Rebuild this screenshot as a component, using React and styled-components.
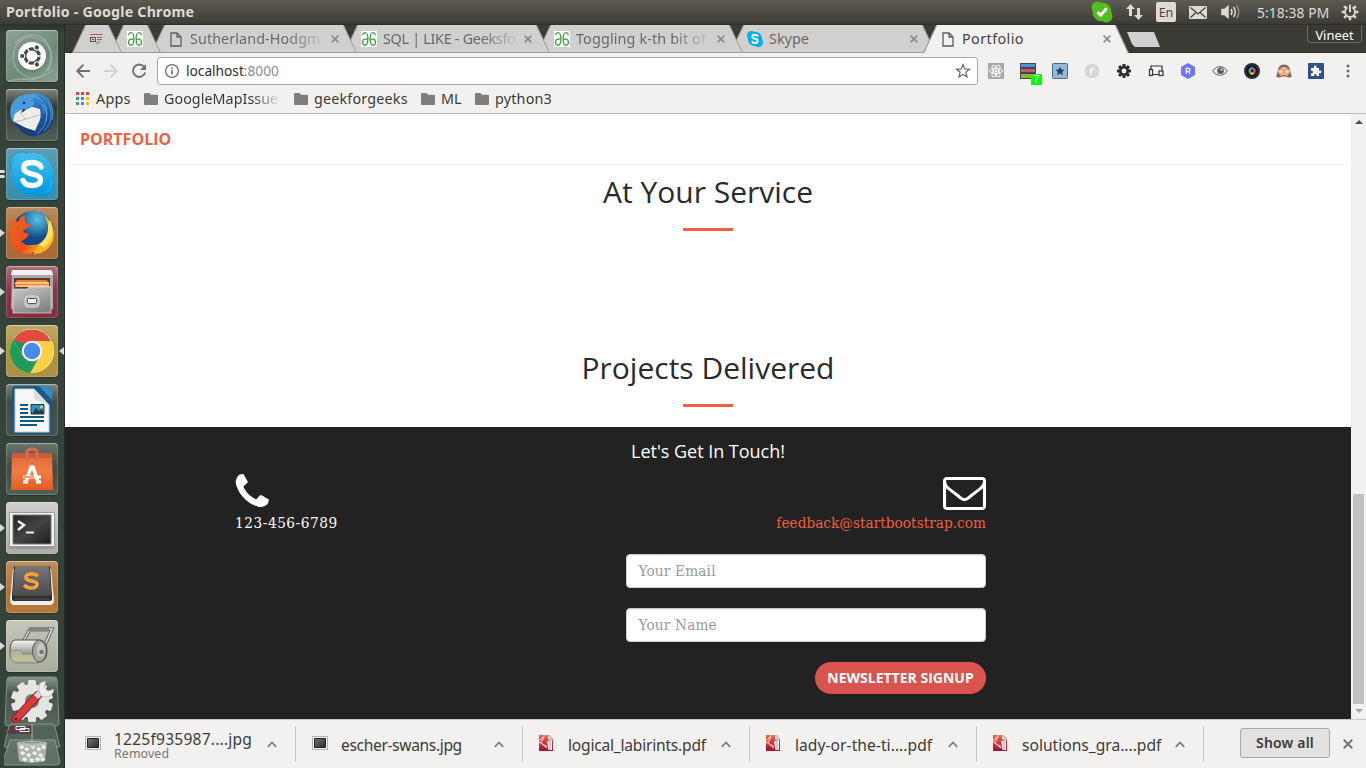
import React from "react";
import styled, { createGlobalStyle } from "styled-components";

const Global = createGlobalStyle`
  * { box-sizing: border-box; }
  html, body { margin: 0; padding: 0; overflow: hidden; }
  body { font-family: "Noto Sans", "Open Sans", sans-serif; color: #3c3b37; }
  svg { display: block; flex: none; }
`;

const Desktop = styled.div`
  width: 1366px;
  height: 768px;
  display: flex;
  flex-direction: column;
  overflow: hidden;
`;

/* ---------- system panel ---------- */
const Panel = styled.header`
  height: 24px;
  display: flex;
  align-items: center;
  padding: 0 7px 0 6px;
  background: linear-gradient(#5f5d4f 0, #59564e 3px, #403e39 22px, #3a3833 24px);
  color: #dfdbd2;
`;
const PanelTitle = styled.div`
  flex: 1;
  font-size: 14.2px;
  font-weight: 700;
  letter-spacing: 0.22px;
  line-height: 24px;
`;
const Indicators = styled.div`
  display: flex;
  align-items: center;
`;
const Indicator = styled.div`
  margin-left: ${(p) => p.$gap}px;
`;
const LangBox = styled.div`
  width: 20px;
  height: 20px;
  margin-left: 13px;
  border-radius: 2px;
  background: #dfdbd2;
  color: #45433e;
  font-size: 12.5px;
  line-height: 21px;
  text-align: center;
`;
const Clock = styled.div`
  width: 72px;
  margin-left: 16px;
  font-size: 13.8px;
  letter-spacing: 0.1px;
  white-space: nowrap;
`;

/* ---------- dock ---------- */
const Body = styled.div`
  flex: 1;
  display: flex;
  min-height: 0;
`;
const Dock = styled.nav`
  width: 65px;
  padding: 6px 0 0 6px;
  display: flex;
  flex-direction: column;
  gap: 7px;
  background: linear-gradient(#28332a 0, #364339 9px, #35433a 60%, #344238);
  border-right: 1px solid #262d28;
`;
const DockTile = styled.div`
  position: relative;
  width: 52px;
  height: 52px;
  flex: none;
  border-radius: 4px;
  background: ${(p) => p.$bg};
  box-shadow: inset 0 0 0 1px rgba(255, 255, 255, 0.17), inset 0 1px 1px rgba(255, 255, 255, 0.35),
    0 1px 1px rgba(0, 0, 0, 0.25);
`;
const Pip = styled.i`
  position: absolute;
  left: -6px;
  top: 22px;
  border: solid transparent;
  border-width: 4px 0 4px 5px;
  border-left-color: #d9d9d9;
`;
const PipBar = styled.i`
  position: absolute;
  left: -6px;
  top: ${(p) => p.$top}px;
  width: 5px;
  height: 2.5px;
  border-radius: 0 2px 2px 0;
  background: #dcdcdc;
`;
const FocusPip = styled.i`
  position: absolute;
  right: -6px;
  top: 22px;
  border: solid transparent;
  border-width: 4px 5px 4px 0;
  border-right-color: #d9d9d9;
`;
const Folded = styled.div`
  margin: -3px 0 0 -2px;
`;

/* ---------- browser ---------- */
const Browser = styled.main`
  flex: 1;
  display: flex;
  flex-direction: column;
  min-width: 0;
`;
const TabStrip = styled.div`
  height: 29px;
  padding: 1px 4px 0 7px;
  display: flex;
  align-items: flex-start;
  background: #3c3a35;
  box-shadow: inset 0 1px 0 #2f2e2a, inset 0 -1px 0 #2b2a27;
`;
const TabShape = styled.div`
  position: relative;
  z-index: ${(p) => (p.$active ? 20 : p.$z)};
  width: ${(p) => p.$width}px;
  height: 28px;
  flex: none;
  margin-right: ${(p) => p.$next}px;
  display: flex;
  align-items: center;
  padding: 0 18px 0 ${(p) => p.$pad}px;
  color: ${(p) => (p.$active ? "#45443f" : "#6b6966")};
  &::before,
  &::after {
    content: "";
    position: absolute;
    inset: 0;
    z-index: -1;
    clip-path: polygon(0 100%, 13px 0, calc(100% - 13px) 0, 100% 100%);
    background: #9b9997;
  }
  &::after {
    inset: 0 1.3px ${(p) => (p.$active ? 0 : 1)}px 1.3px;
    background: ${(p) => (p.$active ? "#f2f1f0" : "#d2d0cf")};
  }
`;
const TabTitle = styled.span`
  flex: none;
  white-space: nowrap;
  font-size: 14.4px;
  line-height: 26px;
  letter-spacing: ${(p) => p.$ls || 0}px;
  margin-left: ${(p) => p.$gap}px;
  -webkit-mask-image: ${(p) => (p.$fade ? "linear-gradient(90deg, #000 74%, rgba(0, 0, 0, 0.15))" : "none")};
`;
const TabClose = styled.div`
  margin-left: auto;
`;
const NewTab = styled.div`
  width: 33px;
  height: 15px;
  margin: 7px 0 0 -2px;
  background: #d2d0cf;
  clip-path: polygon(0 0, 27px 0, 33px 100%, 8px 100%, 5px 80%);
`;
const UserBadge = styled.div`
  margin-left: auto;
  width: 55px;
  height: 18px;
  border: 1px solid #6d6b66;
  border-top: none;
  border-radius: 0 0 4px 4px;
  background: #3a3833;
  color: #fff;
  font-size: 12.9px;
  line-height: 20px;
  text-align: center;
`;
const Toolbar = styled.div`
  height: 33px;
  display: flex;
  align-items: center;
  padding: 2px 10px 0 10px;
  background: #f2f1f0;
`;
const NavButtons = styled.div`
  display: flex;
  gap: 12px;
  margin-right: 10px;
`;
const UrlBox = styled.div`
  width: 821px;
  height: 28px;
  display: flex;
  align-items: center;
  padding: 0 6px 0 6px;
  border: 1px solid #a9a7a5;
  border-radius: 3px;
  background: #fff;
  font-size: 13.8px;
  color: #2f2f2f;
`;
const Address = styled.span`
  flex: 1;
  margin-left: 6px;
  letter-spacing: -0.05px;
  span { color: #8e8e8e; }
`;
const Extensions = styled.div`
  display: flex;
  gap: 16px;
  margin-left: 10px;
`;
const Extension = styled.div`
  position: relative;
  width: 16px;
  height: 16px;
`;
const Count = styled.b`
  position: absolute;
  left: 11px;
  top: 11px;
  width: 11px;
  height: 11px;
  background: #0f0;
  color: #fff;
  font: 10.5px/11px "Liberation Sans", sans-serif;
  text-align: center;
`;
const Bookmarks = styled.div`
  height: 28px;
  display: flex;
  align-items: center;
  padding: 0 0 2px 11px;
  border-bottom: 1px solid #b9b7b5;
  background: #f2f1f0;
`;
const Bookmark = styled.div`
  display: flex;
  align-items: center;
  width: ${(p) => p.$width}px;
  gap: ${(p) => p.$gap || 6}px;
  font-size: 14.3px;
  line-height: 24px;
  color: #3a3935;
  letter-spacing: ${(p) => p.$ls || 0}px;
  white-space: nowrap;
  span {
    -webkit-mask-image: ${(p) => (p.$fade ? "linear-gradient(90deg, #000 78%, rgba(0, 0, 0, 0.1))" : "none")};
  }
`;

/* ---------- web page ---------- */
const Viewport = styled.div`
  flex: 1;
  display: flex;
  min-height: 0;
`;
const Page = styled.div`
  flex: 1;
  display: flex;
  flex-direction: column;
  background: #fff;
  font-family: "Open Sans", sans-serif;
`;
const Navbar = styled.div`
  height: 51px;
  padding: 0 15px;
  border-bottom: 1px solid #f2f2f2;
  color: #f05f40;
  font-size: 16px;
  font-weight: 700;
  line-height: 50px;
`;
const Section = styled.section`
  height: ${(p) => p.$height}px;
  padding-top: 10px;
  text-align: center;
`;
const Heading = styled.h2`
  margin: 0;
  font-size: 30px;
  font-weight: 400;
  line-height: 33px;
  color: #2a2a2a;
`;
const Rule = styled.div`
  width: 50px;
  height: 3px;
  margin: 20px auto 0;
  background: #f05f40;
`;
const Contact = styled.section`
  flex: 1;
  padding-top: 14px;
  background: #222;
  color: #fff;
  font-family: "DejaVu Serif Condensed", "DejaVu Serif", serif;
  font-stretch: condensed;
  h4 {
    margin: 0;
    font: 400 18px/20px "Open Sans", sans-serif;
    letter-spacing: -0.03px;
    text-align: center;
  }
`;
const ContactInner = styled.div`
  width: 751px;
  margin-left: 170px;
`;
const ContactRow = styled.div`
  display: flex;
  justify-content: space-between;
  height: 93px;
  padding-top: 13px;
  font-size: 15.2px;
  line-height: 20px;
`;
const Way = styled.div`
  display: flex;
  flex-direction: column;
  align-items: ${(p) => (p.$end ? "flex-end" : "flex-start")};
  color: ${(p) => (p.$end ? "#f05f40" : "#fff")};
  letter-spacing: ${(p) => p.$ls}px;
  padding-top: ${(p) => (p.$end ? 3 : 0)}px;
  svg { margin-bottom: ${(p) => (p.$end ? 3 : 6)}px; }
`;
const Form = styled.form`
  display: flex;
  flex-direction: column;
  align-items: flex-end;
  gap: 20px;
`;
const Field = styled.div`
  width: 360px;
  height: 34px;
  padding: 0 11.5px;
  border: 1px solid #ccc;
  border-radius: 4px;
  background: #fff;
  box-shadow: inset 0 1px 1px rgba(0, 0, 0, 0.075);
  color: #999;
  font-size: 15.2px;
  letter-spacing: 0.18px;
  line-height: 32px;
`;
const Signup = styled.div`
  width: 171px;
  height: 32px;
  border-radius: 16px;
  background: #d9534f;
  font: 700 14px/32px "Open Sans", sans-serif;
  text-align: center;
`;
const Scrollbar = styled.div`
  width: 15px;
  display: flex;
  flex-direction: column;
  align-items: center;
  justify-content: space-between;
  padding: 6px 0 6px;
  background: #f1f1f1;
`;
const Arrow = styled.i`
  border: solid transparent;
  border-width: ${(p) => (p.$up ? "0 4px 4px" : "4px 4px 0")};
  border-color: ${(p) => (p.$up ? "transparent transparent #505050" : "#a3a3a3 transparent transparent")};
`;
const Thumb = styled.div`
  width: 11px;
  height: 210px;
  margin: auto 0 5px;
  background: #c1c1c1;
`;

/* ---------- downloads ---------- */
const Shelf = styled.footer`
  height: 49px;
  display: flex;
  align-items: center;
  padding: 0 13px 0 4px;
  border-top: 1px solid #c9c7c6;
  background: #f2f1f0;
`;
const Download = styled.div`
  width: 227px;
  height: 36px;
  display: flex;
  align-items: center;
  padding: 0 18px 0 16px;
  border-right: 1px solid #cac8c6;
  > svg:first-child { margin-top: -2px; }
  > svg:last-child { margin-left: auto; }
`;
const FileName = styled.div`
  margin-left: ${(p) => p.$gap}px;
  padding-top: ${(p) => (p.$note ? 0 : 1)}px;
  font-size: 15.6px;
  line-height: 20px;
  letter-spacing: ${(p) => p.$ls}px;
  white-space: nowrap;
`;
const FileNote = styled.div`
  margin-top: -2px;
  font-size: 12.4px;
  line-height: 13px;
  letter-spacing: 0.1px;
  color: #777572;
`;
const ShowAll = styled.div`
  width: 90px;
  height: 30px;
  margin: -2px 13px 0 auto;
  border: 1px solid #aaa8a5;
  border-radius: 3px;
  background: #e4e2e0;
  font-size: 14px;
  font-weight: 600;
  line-height: 28px;
  text-align: center;
  letter-spacing: 0.2px;
`;

/* ---------- small drawings ---------- */
const Cross = ({ size = 8, color = "#8a8886", w = 1.5 }) => (
  <svg width={size} height={size} viewBox="0 0 8 8" stroke={color} strokeWidth={w}><path d="M.6.6l6.8 6.8M7.4.6L.6 7.4" /></svg>
);
const DocIcon = () => (
  <svg width="12" height="15" viewBox="0 0 12 15" fill="none" stroke="#5f5e5c" strokeWidth="1.3"><path d="M1 1h6l4 4v9H1zM7 1v4h4" /></svg>
);
const GeeksIcon = () => (
  <svg width="16" height="16" viewBox="0 0 16 16" fill="none" stroke="#3a9a3d" strokeWidth="1.25">
    <path fill="#fff" stroke="none" d="M0 0h16v16H0z" />
    <path d="M1.500 4Q2.200 1.500 4 1.500 6.900 2 6.900 7.500 6.900 14.300 4 14.300 1.500 14 1.500 11.200 1.700 8.200 4.500 8H7M14.500 4Q13.800 1.500 12 1.500 9.100 2 9.100 7.500 9.100 14.300 12 14.300 14.500 14 14.500 11.200 14.300 8.200 11.500 8H9" />
  </svg>
);
const SkypeTabIcon = () => (
  <svg width="16" height="16" viewBox="0 0 16 16">
    <circle cx="8" cy="8" r="7.200" fill="#00aff0" /><circle cx="4.500" cy="4.500" r="4.500" fill="#00aff0" /><circle cx="11.500" cy="11.500" r="4.500" fill="#00aff0" />
    <path d="M11 5.500Q10 3.800 8 3.800 5.300 3.900 5.300 5.800 5.400 7.300 8 7.800 10.700 8.300 10.700 10 10.600 12 8 12.100 5.800 12 4.900 10.300" fill="none" stroke="#fff" strokeWidth="1.900" />
  </svg>
);
const NewsIcon = () => (
  <svg width="13" height="11" viewBox="0 0 13 11">
    <path d="M0 0h12v1H0z" fill="#e0463f" /><path d="M0 3h6v5H0zM1 4v3h4V4z" fillRule="evenodd" fill="#555" /><path d="M2 5h2v1H2z" fill="#555" />
    <path d="M7 3h5v1H7zM7 5h5v1H7z" fill="#777" /><path d="M7 7h5L8 10.500H5z" fill="#aaa" />
  </svg>
);
const Folder = () => (
  <svg width="14" height="12" viewBox="0 0 14 12"><path d="M1 0h4.500L7 1.700h6q1 0 1 1V11q0 1-1 1H1q-1 0-1-1V1q0-1 1-1z" fill="#7f7e7d" /></svg>
);
const AppsIcon = () => {
  const c = ["#ea4335", "#ea4335", "#ea4335", "#34a853", "#4285f4", "#fbbc05", "#34a853", "#4285f4", "#fbbc05"];
  return <svg width="13" height="13" viewBox="0 0 13 13">{c.map((f, i) => <rect key={i} x={(i % 3) * 5} y={Math.floor(i / 3) * 5} width="3" height="3" fill={f} />)}</svg>;
};
const Back = ({ flip, color }) => (
  <svg width="16" height="16" viewBox="0 0 16 16" fill="none" stroke={color} strokeWidth="1.900"><path d={flip ? "M1 8h12.500M7.500 1.700L13.800 8l-6.300 6.300" : "M15 8H2.500M8.500 1.700L2.200 8l6.300 6.300"} /></svg>
);
const Reload = () => (
  <svg width="16" height="16" viewBox="0 0 16 16"><path d="M13 3.700A6.200 6.200 0 1 0 14.200 9.500" fill="none" stroke="#70706e" strokeWidth="1.900" /><path d="M15 1v6H9z" fill="#70706e" /></svg>
);
const Info = () => (
  <svg width="16" height="16" viewBox="0 0 16 16" fill="none" stroke="#6d6d6d" strokeWidth="1.300"><circle cx="8" cy="8" r="6.400" /><path d="M8 7v4.500M8 4.300v1.500" strokeWidth="1.600" /></svg>
);
const Star = () => (
  <svg width="16" height="16" viewBox="0 0 16 16" fill="none" stroke="#6d6d6d" strokeWidth="1.300"><path d="M8 1.600l1.800 4.300 4.600.4-3.500 3 1.100 4.600L8 11.500l-4 2.400 1.100-4.600-3.500-3 4.600-.4z" /></svg>
);
const Chevron = () => (
  <svg width="10" height="7" viewBox="0 0 10 7" fill="none" stroke="#7d7b79" strokeWidth="1.700"><path d="M.8 5.800L5 1.500l4.200 4.300" /></svg>
);
const ImageFile = () => (
  <svg width="16" height="14" viewBox="0 0 16 14"><defs><linearGradient id="img" x2="1" y2="1"><stop stopColor="#777" /><stop offset="1" stopColor="#292929" /></linearGradient></defs><path d="M.5.5h15v13H.5z" fill="#f6f6f6" stroke="#b0b0b0" /><path d="M2.500 2.500h11v9h-11z" fill="url(#img)" stroke="#222" /></svg>
);
const PdfFile = () => (
  <svg width="14" height="16" viewBox="0 0 14 16"><defs><linearGradient id="pdf" x2="0" y2="1"><stop stopColor="#e56a54" /><stop offset=".5" stopColor="#cf3038" /><stop offset="1" stopColor="#9c1438" /></linearGradient></defs>
    <path d="M0 0h10l4 4v12H0z" fill="url(#pdf)" /><path d="M6 0L0 6M0 7l8 4.500M5 2L2 8l6 5" stroke="#f4b5aa" strokeWidth="1.200" fill="none" /><path d="M8 6.500l5-2V15H9.500z" fill="#eee" /><path d="M9 0l5 4.500H9z" fill="#ddd" stroke="#bbb" strokeWidth=".4" /><path d="M11 5v10" stroke="#aaa" /></svg>
);

const Gear = ({ size, fill, teeth = 8, hole, r = 6 }) => (
  <svg width={size} height={size} viewBox="-8 -8 16 16">
    <g fill={fill}>{Array.from({ length: teeth }, (_, i) => <rect key={i} x="-1.500" y="-7" width="3" height="4.500" rx=".4" transform={`rotate(${(i * 360) / teeth})`} />)}<circle r={r} /></g>
    <circle r="2.400" fill={hole} />
  </svg>
);

const extensionArt = [
  <svg width="16" height="16" viewBox="0 0 16 16"><path d="M0 0h16v16H0z" fill="#a9a9a9" /><g fill="none" stroke="#fff" strokeWidth=".9"><ellipse cx="8" cy="8" rx="6.500" ry="2.500" /><ellipse cx="8" cy="8" rx="6.500" ry="2.500" transform="rotate(60 8 8)" /><ellipse cx="8" cy="8" rx="6.500" ry="2.500" transform="rotate(120 8 8)" /></g><circle cx="8" cy="8" r="1.300" fill="#fff" /></svg>,
  <><svg width="16" height="16" viewBox="0 0 16 16"><path d="M0 0h16v16H0z" fill="#404750" /><path d="M1 1h14v3H1z" fill="#4f93d2" /><path d="M1 6h14v3H1z" fill="#d94f68" /><path d="M1 11h14v4H1z" fill="#8fb52b" /></svg><Count>7</Count></>,
  <svg width="16" height="16" viewBox="0 0 16 16"><rect x=".5" y=".5" width="15" height="15" rx="1" fill="#94bad6" stroke="#486c88" /><path d="M8 3.500l1.300 3 3.300.3-2.500 2.200.8 3.200L8 10.500l-2.900 1.700.8-3.200-2.500-2.200 3.300-.3z" fill="#20415c" /></svg>,
  <svg width="16" height="16" viewBox="0 0 16 16"><circle cx="8" cy="8" r="7.300" fill="#d8d7d6" /><path d="M7 11.500V5.500M7 7.500Q8 5.500 10 5.800" stroke="#fafafa" strokeWidth="1.700" fill="none" /></svg>,
  <Gear size={16} fill="#2c2c2c" hole="#f2f1f0" r={5} />,
  <svg width="16" height="16" viewBox="0 0 16 16" fill="#f8f8f8" stroke="#333" strokeWidth="1.200"><path d="M3 6V3h11v5M5 11.500h5.500" /><rect x="1.500" y="6.500" width="3" height="6" /><rect x="11" y="8" width="4" height="4.500" /></svg>,
  <svg width="16" height="16" viewBox="0 0 16 16"><path d="M8 0l7 4v8l-7 4-7-4V4z" fill="#6e75f5" /><path d="M6.200 11V5.400h2.200q1.600 0 1.600 1.500t-1.600 1.600H6.500M8.300 8.500L10 11" fill="none" stroke="#fff" strokeWidth="1.200" /></svg>,
  <svg width="16" height="16" viewBox="0 0 16 16" fill="none" stroke="#777" strokeWidth="1.100"><path d="M.7 8Q4 3.500 8 3.500T15.300 8Q12 12.300 8 12.300T.7 8z" /><circle cx="8.500" cy="7.700" r="3" fill="#555" /><circle cx="9.500" cy="6.700" r="1" fill="#eee" stroke="none" /></svg>,
  <svg width="16" height="16" viewBox="0 0 16 16"><circle cx="8" cy="8" r="8" fill="#292c33" /><circle cx="8" cy="8" r="5.200" fill="#07080a" /><path d="M8 8L5 5.500Q6.500 3.500 9 4z" fill="#24acd8" /><path d="M8 8l1-4q2.500.8 2.800 3z" fill="#b04ac8" /><path d="M8 8l3.800-1q.4 3-1.600 4.300z" fill="#ee4444" /><path d="M8 8l2.200 3.300Q8 12.500 6 11.300z" fill="#efd33c" /><path d="M8 8l-2 3.300Q3.500 9 5 5.500z" fill="#39c26c" /><circle cx="8" cy="8" r="1.300" fill="#111" /></svg>,
  <svg width="16" height="16" viewBox="0 0 16 16"><path d="M2 8Q2 1.500 8 1.500T14 8l1.800 5.500q-2 1.500-4.800.5H5q-2.800 1-4.800-.5z" fill="#8a6350" /><circle cx="8" cy="9" r="5" fill="#eebd91" /><path d="M1.800 7l5-.7 1 2.200-1.500 2.500H3zM14.200 7l-5-.7-1 2.200L9.700 11H13z" fill="#f8d0aa" stroke="#b97e59" strokeWidth=".6" /><path d="M6.500 12.500h3" stroke="#a5473d" /></svg>,
  <svg width="16" height="16" viewBox="0 0 16 16"><rect width="16" height="16" rx="1" fill="#30518d" /><path d="M3 5h3.200q-.9-2.500 1-2.500T8.300 5H11v2.800q2.500-.9 2.500 1T11 9.900V13H8.400q.7-2-1.100-2T6.200 13H3v-3q2 .6 2-1.100T3 7.800z" fill="#fff" /></svg>,
  <svg width="16" height="16" viewBox="0 0 16 16" fill="#6c6b69"><circle cx="8" cy="3" r="1.500" /><circle cx="8" cy="8" r="1.500" /><circle cx="8" cy="13" r="1.500" /></svg>,
];

/* ---------- dock artwork ---------- */
const Art = ({ children }) => <svg width="52" height="52" viewBox="0 0 52 52">{children}</svg>;
const UbuntuArt = () => (
  <Art>
    <g fill="none" stroke="#c9d5cd" strokeOpacity=".45" strokeWidth="1.200"><path d="M2 51Q13 48 25 50 44 46 45 26 43 9 25 7 7 9 7 29 8 41 20 46M9 13Q24-1 38 9 51 23 42 41M20 47q13 4 27-7" /></g>
    <circle cx="26" cy="27" r="14.500" fill="#3e5146" opacity=".35" /><circle cx="26" cy="26" r="14" fill="#fff" />
    <circle cx="26" cy="26" r="7.200" fill="none" stroke="#3d4c43" strokeWidth="3.200" />
    {[60, 180, 300].map((a) => <g key={a} transform={`rotate(${a} 26 26)`}><circle cx="35.800" cy="26" r="3.100" fill="#fff" /><circle cx="35.800" cy="26" r="2.100" fill="#3d4c43" /></g>)}
    {[0, 120, 240].map((a) => <path key={a} transform={`rotate(${a} 26 26)`} d="M30 26h6" stroke="#fff" strokeWidth="1.400" />)}
  </Art>
);
const ThunderbirdArt = () => (
  <Art>
    <defs><linearGradient id="tb" x2=".7" y2="1"><stop stopColor="#69bff4" /><stop offset=".5" stopColor="#2871bb" /><stop offset="1" stopColor="#123b7b" /></linearGradient></defs>
    <path d="M24 5Q36 1 44 12q6 10 3 21-4 11-17 14-8 1-14-4l-8-9q-6-8-3-17Q9 6 24 5z" fill="url(#tb)" />
    <path d="M9 22l14-5 11 3q2 9-2 15l-3 7-9-3L7 32z" fill="#efede9" /><path d="M12 22l8 8 13-4M20 30l-12 3" stroke="#c3bbb2" fill="none" /><path d="M6 32q9 6 23 10l-2 5q-8 0-12-5z" fill="#1c3f76" />
    <path d="M6 32Q2 18 12 9q9-7 20-2l-6 3q5 5-2 9-5 3-9 2-7 2-9 11z" fill="#4a9bdc" /><path d="M17 20l-2 4 5-3z" fill="#222d3c" />
    <path d="M30 8q11 4 11 17 0 12-10 20M36 7q9 7 9 18t-7 17M41 9q8 10 5 22M37 15q5 7 3 17M32 12q6 4 6 12" stroke="#6eb7ec" strokeWidth="1" fill="none" opacity=".65" />
    <circle cx="18" cy="14" r="1.300" fill="#14345e" />
  </Art>
);
const SkypeArt = () => (
  <Art>
    <defs><linearGradient id="sk" x2="0" y2="1"><stop stopColor="#45bff0" /><stop offset="1" stopColor="#0099df" /></linearGradient></defs>
    <g fill="url(#sk)" stroke="#168cbd" strokeWidth=".7"><circle cx="16" cy="16" r="12" /><circle cx="36" cy="36" r="12" /></g><circle cx="26" cy="26" r="21" fill="url(#sk)" />
    <path d="M35 19Q33 14.500 26 14.500q-8 0-8.500 5 0 4.500 8 6.300 9.500 1.700 9 6.500Q34 37.500 26.500 37.500 19 37.500 17 32.500" fill="none" stroke="#fff" strokeWidth="5.300" strokeLinecap="round" />
  </Art>
);
const FirefoxArt = () => (
  <Art>
    <defs><radialGradient id="fx" cx=".6" cy=".2"><stop stopColor="#59c4e9" /><stop offset=".9" stopColor="#124886" /></radialGradient><linearGradient id="fo" x2="1" y2="1"><stop stopColor="#e86824" /><stop offset=".65" stopColor="#ed4e18" /><stop offset="1" stopColor="#ffb21b" /></linearGradient></defs>
    <circle cx="27" cy="25" r="21" fill="url(#fx)" />
    <path d="M38 8q13 11 9 26-5 12-18 13l-8-9q17 2 21-10 2-9-4-20z" fill="#f7b522" /><path d="M44 13q7 17-5 27l-8-2q12-6 11-20z" fill="#ffe15a" />
    <path d="M7 11l5 4q2-6 7-7-1 5 1 8l5 2q-3 4-8 5 1 4 6 3-1 6-8 8 7 8 18 3-2 9-12 10Q11 48 5 36 2 24 7 11z" fill="url(#fo)" />
  </Art>
);
const FilesArt = () => (
  <Art>
    <defs><linearGradient id="fc" x2=".6" y2="1"><stop stopColor="#ccc" /><stop offset="1" stopColor="#848484" /></linearGradient></defs>
    <path d="M6 5q0-1 2-1h36q3 0 3 4v35H5z" fill="#aaa" /><path d="M6 4h39l2 5H5z" fill="#f1f1f1" /><path d="M8 12h36v12H8z" fill="#5e3929" /><path d="M9 17l2-3h30l3 7H9z" fill="#e68134" /><path d="M9 17h34M10 20h33" stroke="#ffd8a0" strokeWidth="1.500" />
    <path d="M7 23h14l2-2h22v26H7z" fill="url(#fc)" stroke="#dedede" strokeWidth=".7" /><rect x="19" y="30" width="14" height="11" rx="3" fill="#bbb" stroke="#ddd" /><rect x="21.500" y="32.500" width="9" height="5" rx="1" fill="#eee" stroke="#555" />
  </Art>
);
const ChromeArt = () => (
  <Art>
    <circle cx="26" cy="26" r="22" fill="#fff" />
    <path d="M26 26L6.900 15A22 22 0 0 1 45.100 16H26z" fill="#df4b41" /><path d="M26 26l-8.700 5L6.900 15A22 22 0 0 0 24.500 48L34 31z" fill="#209c5a" /><path d="M26 16h19.100A22 22 0 0 1 24.500 48L34.700 31z" fill="#ffd044" />
    <path d="M6.900 15l10.400 16 2-12z" fill="#1d9156" /><circle cx="26" cy="26" r="10.300" fill="#f5f5f5" /><circle cx="26" cy="26" r="8.200" fill="#4a89ec" />
  </Art>
);
const WriterArt = () => (
  <Art>
    <rect x="6" y="2" width="40" height="48" rx="4" fill="#155985" /><path d="M33 2h10q3 0 3 4v10z" fill="#368ec0" /><path d="M9 5h19l15 16v27H9z" fill="#f8f8f8" stroke="#ccc" /><path d="M28 5v8q0 3 4 4l11 4z" fill="#ddd" />
    <path d="M14 21h8M14 25h8M14 29h8M14 33h24M14 37h24M14 41h17" stroke="#155680" strokeWidth="2" /><path d="M25 20.500h13v9.500H25z" fill="#3592c1" stroke="#17455e" /><path d="M26 30l4-6 3 3 3-2 2 5z" fill="#273b44" /><circle cx="35.500" cy="23" r="1.500" fill="#eec948" />
  </Art>
);
const SoftwareArt = () => (
  <Art>
    <defs><linearGradient id="sw" x2="0" y2="1"><stop stopColor="#df663c" /><stop offset=".5" stopColor="#f47c42" /><stop offset="1" stopColor="#e35c25" /></linearGradient></defs>
    <path d="M6 10h40l1 37H5z" fill="url(#sw)" /><path d="M6 10h40v5H6z" fill="#b74e30" opacity=".5" /><path d="M21 18V9q0-3 5-3t5 3v9" fill="none" stroke="#d86b4b" strokeWidth="3" /><path d="M20 39l5-15h2l5 15" fill="none" stroke="#fff" strokeWidth="3.500" /><path d="M17 34h18M17 39h5M30 39h5" stroke="#fff" strokeWidth="3" /><path d="M18 34h10" stroke="#f06d33" strokeWidth="1.300" />
  </Art>
);
const TerminalArt = () => (
  <Art>
    <defs><linearGradient id="tr" x2="1" y2="1"><stop stopColor="#252525" /><stop offset=".5" stopColor="#444" /><stop offset="1" stopColor="#1d1d1d" /></linearGradient></defs>
    <rect x="3" y="10" width="46" height="37" rx="2" fill="#989898" /><rect x="4" y="11" width="44" height="33" fill="#f5f5f5" /><rect x="7" y="13" width="38" height="29" fill="url(#tr)" stroke="#777" /><path d="M12 19l6 4-6 5" fill="none" stroke="#eee" strokeWidth="2.500" /><path d="M20 30.500h8" stroke="#eee" strokeWidth="2" />
  </Art>
);
const SublimeArt = () => (
  <Art>
    <defs><linearGradient id="sb" x2="0" y2="1"><stop stopColor="#777" /><stop offset="1" stopColor="#4a4a4a" /></linearGradient></defs>
    <path d="M7 8h38l3 30q0 6-4 6H8q-4 0-4-6z" fill="#eee" /><path d="M8 5h36l2 30v3q0 2-3 2H9q-3 0-3-2v-3z" fill="#303030" /><path d="M9 5h34l2 27q0 3-2 3H9q-2 0-2-3z" fill="url(#sb)" /><path d="M32 15q-4-3-8-2-5 1-4 4 0 2 6 3 6 1 5 4-1 3-6 3-4 0-7-3" fill="none" stroke="#ffa03a" strokeWidth="3.500" /><path d="M9 38h34" stroke="#555" />
  </Art>
);
const RollerArt = () => (
  <Art>
    <defs><linearGradient id="rl" x2="0" y2="1"><stop stopColor="#f8f8f5" /><stop offset=".6" stopColor="#9a9d92" /><stop offset="1" stopColor="#cbccad" /></linearGradient></defs>
    <path d="M17 22l6-11q1-3 4-2h19L36 32" fill="none" stroke="#666" strokeWidth="3.500" /><path d="M17 22l6-11q1-3 4-2h19L36 32" fill="none" stroke="#dcdcd7" strokeWidth="1.500" /><path d="M25 9.500h16" stroke="#858581" strokeWidth="4.500" strokeLinecap="round" />
    <path d="M9 20h25q7 1 7 11t-7 11H9q-5-1-5-11t5-11z" fill="url(#rl)" stroke="#4e504b" /><path d="M5 31l9-1 3 4h15v9H9q-5-1-5-9z" fill="#bfc09d" opacity=".75" stroke="#666" strokeWidth=".6" /><ellipse cx="33.500" cy="31" rx="7" ry="11" fill="#a5a5a1" stroke="#555" /><ellipse cx="35" cy="30" rx="4" ry="7" fill="#c7c7c3" /><circle cx="35.500" cy="32" r="2.300" fill="#777" />
  </Art>
);
const FoldedArt = () => (
  <svg width="58" height="93" viewBox="0 0 58 93">
    <defs><linearGradient id="fd" x2="0" y2="1"><stop stopColor="#89958d" /><stop offset=".35" stopColor="#46534a" /><stop offset="1" stopColor="#59665d" /></linearGradient></defs>
    <path d="M6 1h44q3 0 3 3l2 43q0 3-3 3H4q-3 0-3-3L3 4q0-3 3-3z" fill="url(#fd)" stroke="#83928a" />
    <g transform="translate(28 25)" fill="#e5e5e2">{Array.from({ length: 10 }, (_, i) => <rect key={i} x="-4" y="-21" width="8" height="12" rx="1.500" transform={`rotate(${i * 36})`} />)}<circle r="17" /><circle r="7" fill="#6f7b73" /></g>
    <path d="M12 43L34 19" stroke="#8d1720" strokeWidth="8.500" strokeLinecap="round" /><path d="M12 43L34 19" stroke="#dc3a3a" strokeWidth="6.500" strokeLinecap="round" /><path d="M32 21l7-7" stroke="#d9d9d9" strokeWidth="6" /><path d="M35 14q-1-8 7-9l-2 6 4 4 6-2q-1 8-9 8-5 0-6-7z" fill="#ededed" stroke="#aaa" strokeWidth=".6" /><circle cx="12" cy="43" r="1.500" fill="#6f1118" />
    <path d="M7 48h40q3 0 4 3l5 20H0L5 50z" fill="#58675e" fillOpacity=".9" stroke="#96a199" strokeWidth=".8" /><path d="M6 50h22v8H3z" fill="#5c2439" opacity=".6" /><path d="M12 50.500h9v3h-9zM16 52.500h9v3h-9z" fill="#583e49" stroke="#eee" />
    <path d="M6 64h45l5 22q0 3-4 3H1q-3 0-2-4z" fill="#66746b" fillOpacity=".9" stroke="#98a59c" strokeWidth=".8" />
    <path d="M13 67h30l-2 18q-13 4-26 0z" fill="#aab2ac" />
    <g fill="#eeefed">{[[17, 71], [22, 73], [28, 71], [34, 73], [39, 71], [18, 77], [24, 79], [30, 77], [36, 79], [20, 83], [27, 84], [33, 83], [38, 83]].map(([x, y]) => <path key={`${x}-${y}`} d={`M${x - 2} ${y}l2-2 2.500 1 .5 2-2.500 1.500z`} />)}</g>
    <ellipse cx="28" cy="67.500" rx="15" ry="1.800" fill="none" stroke="#c8d0ca" /><path d="M28 48v24" stroke="#aab3ac" />
  </svg>
);

const dockItems = [
  { Art: UbuntuArt, bg: "linear-gradient(145deg,#90a195,#6d8b78 60%,#88a392)" },
  { Art: ThunderbirdArt, bg: "linear-gradient(#7d857e,#303a34 35%,#536058)" },
  { Art: SkypeArt, bg: "linear-gradient(#609bb1,#348eac)", bars: true },
  { Art: FirefoxArt, bg: "linear-gradient(#ba8b5e,#b17038 50%,#a96938)", pip: true },
  { Art: FilesArt, bg: "linear-gradient(#ad6e7c,#8b334b 45%,#812e42)", pip: true },
  { Art: ChromeArt, bg: "linear-gradient(#bca767,#b19639 45%,#a99044)", pip: true, focus: true },
  { Art: WriterArt, bg: "linear-gradient(#7b847d,#414c44 35%,#46524a)" },
  { Art: SoftwareArt, bg: "linear-gradient(#68756c,#3c4a40 50%,#4f6253)" },
  { Art: TerminalArt, bg: "linear-gradient(#cfcfcf,#aaa)", pip: true },
  { Art: SublimeArt, bg: "linear-gradient(#bf8e61,#b4712f 60%,#b57a3c)", pip: true },
  { Art: RollerArt, bg: "linear-gradient(#c4c7b9,#a9ad9c)", pip: true },
];

const tabs = [
  { width: 50, next: -12, pad: 18, icon: <NewsIcon /> },
  { width: 51, next: -10, pad: 17, icon: <GeeksIcon /> },
  { width: 206, next: -13, pad: 19, icon: <DocIcon />, gap: 8, title: "Sutherland-Hodgm", ls: 0.06, fade: true },
  { width: 206, next: -13, pad: 17, icon: <GeeksIcon />, gap: 6, title: "SQL | LIKE - Geeksfo", ls: -0.3, fade: true },
  { width: 206, next: -13, pad: 17, icon: <GeeksIcon />, gap: 6, title: "Toggling k-th bit of", ls: 0.12, fade: true },
  { width: 206, next: -13, pad: 17, icon: <SkypeTabIcon />, gap: 6, title: "Skype", ls: 0 },
  { width: 206, next: 0, pad: 19, icon: <DocIcon />, gap: 8, title: "Portfolio", ls: 0.4, active: true },
];

const downloads = [
  { name: "1225f935987....jpg", note: "Removed", Icon: ImageFile, ls: 0.2, gap: 13 },
  { name: "escher-swans.jpg", Icon: ImageFile, ls: -0.36, gap: 13 },
  { name: "logical_labirints.pdf", Icon: PdfFile, ls: -0.22, gap: 15 },
  { name: "lady-or-the-ti....pdf", Icon: PdfFile, ls: 0.05, gap: 15 },
  { name: "solutions_gra....pdf", Icon: PdfFile, ls: 0, gap: 15 },
];

const SkypeStatus = () => (
  <svg width="22" height="22" viewBox="0 0 22 22" fill="#52bd20"><circle cx="6.500" cy="6.500" r="6" /><circle cx="15.500" cy="15.500" r="6" /><circle cx="11" cy="11" r="9.500" /><path d="M6.500 11l3.200 3.200 6-7" stroke="#fff" strokeWidth="2.900" fill="none" /></svg>
);
const Network = () => (
  <svg width="17" height="16" viewBox="0 0 17 16" fill="#dfdbd2"><path d="M4.500 0L9 5H6v7H3V5H0zM12.500 16L8 11h3V4h3v7h3z" /></svg>
);
const Mail = () => (
  <svg width="18" height="13" viewBox="0 0 18 13"><rect width="18" height="13" rx="1" fill="#dfdbd2" /><path d="M1.500 1.500L9 8l7.500-6.500M1.500 11.500L7 6.500M16.500 11.500L11 6.500" stroke="#45433d" strokeWidth="1.200" fill="none" /></svg>
);
const Sound = () => (
  <svg width="20" height="16" viewBox="0 0 20 16" fill="none" stroke="#dfdbd2" strokeWidth="1.500"><path d="M1 5.500h2.500L7 2.500v11L3.500 10.500H1z" fill="#dfdbd2" /><path d="M10 5q2 3 0 6" /><path d="M12.500 3q3.500 5 0 10" /><path d="M15.500 1.300q4.500 6.700 0 13.400" opacity=".45" /></svg>
);
const Power = () => (
  <svg width="18" height="18" viewBox="-9 -9 18 18">
    <g fill="#dfdbd2">{Array.from({ length: 8 }, (_, i) => <rect key={i} x="-1.200" y="-8.300" width="2.400" height="3" transform={`rotate(${i * 45})`} />)}</g>
    <circle r="5" fill="none" stroke="#dfdbd2" strokeWidth="1.800" /><path d="M0-9v8" stroke="#4b4943" strokeWidth="4.500" /><path d="M0-7.500V0" stroke="#dfdbd2" strokeWidth="2" />
  </svg>
);

export default function App() {
  return (
    <Desktop>
      <Global />
      <Panel>
        <PanelTitle>Portfolio - Google Chrome</PanelTitle>
        <Indicators>
          <SkypeStatus />
          <Indicator $gap={13}><Network /></Indicator>
          <LangBox>En</LangBox>
          <Indicator $gap={13}><Mail /></Indicator>
          <Indicator $gap={14}><Sound /></Indicator>
          <Clock>5:18:38 PM</Clock>
          <Indicator $gap={12}><Power /></Indicator>
        </Indicators>
      </Panel>
      <Body>
        <Dock>
          {dockItems.map(({ Art: Picture, bg, pip, bars, focus }, i) => (
            <DockTile key={i} $bg={bg}>
              <Picture />
              {pip && <Pip />}
              {bars && <><PipBar $top={22} /><PipBar $top={27} /></>}
              {focus && <FocusPip />}
            </DockTile>
          ))}
          <Folded><FoldedArt /></Folded>
        </Dock>
        <Browser>
          <TabStrip>
            {tabs.map((t, i) => (
              <TabShape key={i} $width={t.width} $next={t.next} $pad={t.pad} $active={t.active} $z={10 - i}>
                {t.icon}
                {t.title && <TabTitle $gap={t.gap} $ls={t.ls} $fade={t.fade}>{t.title}</TabTitle>}
                {t.title && <TabClose><Cross size={8} /></TabClose>}
              </TabShape>
            ))}
            <NewTab />
            <UserBadge>Vineet</UserBadge>
          </TabStrip>
          <Toolbar>
            <NavButtons><Back color="#70706e" /><Back flip color="#d4d2d0" /><Reload /></NavButtons>
            <UrlBox><Info /><Address>localhost<span>:8000</span></Address><Star /></UrlBox>
            <Extensions>{extensionArt.map((art, i) => <Extension key={i}>{art}</Extension>)}</Extensions>
          </Toolbar>
          <Bookmarks>
            <Bookmark $width={68} $gap={7} $ls={0.3}><AppsIcon /><span>Apps</span></Bookmark>
            <Bookmark $width={150} $ls={0.05} $fade><Folder /><span>GoogleMapIssue</span></Bookmark>
            <Bookmark $width={127} $ls={0.2}><Folder /><span>geekforgeeks</span></Bookmark>
            <Bookmark $width={54}><Folder /><span>ML</span></Bookmark>
            <Bookmark $width={100} $ls={0.22}><Folder /><span>python3</span></Bookmark>
          </Bookmarks>
          <Viewport>
            <Page>
              <Navbar>PORTFOLIO</Navbar>
              <Section $height={176}><Heading>At Your Service</Heading><Rule /></Section>
              <Section $height={86}><Heading>Projects Delivered</Heading><Rule /></Section>
              <Contact>
                <h4>Let's Get In Touch!</h4>
                <ContactInner>
                  <ContactRow>
                    <Way $ls={0.55}>
                      <svg width="34" height="33" viewBox="170 128 1430 1408" fill="#fff"><path d="M1600 1240q0 27-10 70.500t-21 68.500q-21 50-122 106-94 51-186 51-27 0-53-3.500t-57.500-12.500-47-14.500-55.500-20.500-49-18q-98-35-175-83-127-79-264-216t-216-264q-48-77-83-175-3-9-18-49t-20.500-55.500-14.500-47-12.500-57.500-3.500-53q0-92 51-186 56-101 106-122 25-11 68.500-21t70.500-10q14 0 21 3 18 6 53 76 11 19 30 54t35 63.500 31 53.500q3 4 17.500 25t21.500 35.500 7 28.500q0 20-28.500 50t-62 55-62 53-28.500 46q0 9 5 22.500t8.500 20.500 14 24 11.500 19q76 137 174 235t235 174q2 1 19 11.500t24 14 20.500 8.500 22.500 5q18 0 46-28.500t53-62 55-62 50-28.500q14 0 28.500 7t35.500 21.500 25 17.500q25 15 53.500 31t63.500 35 54 30q70 35 76 53 3 7 3 21z" /></svg>
                      123-456-6789
                    </Way>
                    <Way $end $ls={0.03}>
                      <svg width="43" height="33" viewBox="0 256 1792 1408" preserveAspectRatio="none" fill="#fff"><path d="M1664 1504v-768q-32 36-69 66-268 206-426 338-51 43-83 67t-86.500 48.500-102.500 24.500h-2q-48 0-102.500-24.500t-86.500-48.500-83-67q-158-132-426-338-37-30-69-66v768q0 13 9.500 22.500t22.500 9.500h1472q13 0 22.500-9.500t9.500-22.500zm0-1051v-24.500l-.5-13-3-12.500-5.500-9-9-7.500-14-2.500h-1472q-13 0-22.500 9.500t-9.500 22.500q0 168 147 284 193 152 401 317 6 5 35 29.500t46 37.500 44.500 31.500 50.500 27.500 43 9h2q20 0 43-9t50.500-27.500 44.500-31.500 46-37.500 35-29.500q208-165 401-317 54-43 100.500-115.500t46.500-131.500zm128-37v1088q0 66-47 113t-113 47h-1472q-66 0-113-47t-47-113v-1088q0-66 47-113t113-47h1472q66 0 113 47t47 113z" /></svg>
                      feedback@startbootstrap.com
                    </Way>
                  </ContactRow>
                  <Form>
                    <Field>Your Email</Field>
                    <Field>Your Name</Field>
                    <Signup>NEWSLETTER SIGNUP</Signup>
                  </Form>
                </ContactInner>
              </Contact>
            </Page>
            <Scrollbar><Arrow $up /><Thumb /><Arrow /></Scrollbar>
          </Viewport>
          <Shelf>
            {downloads.map(({ name, note, Icon, ls, gap }) => (
              <Download key={name}>
                <Icon />
                <FileName $ls={ls} $gap={gap} $note={note}>{name}{note && <FileNote>{note}</FileNote>}</FileName>
                <Chevron />
              </Download>
            ))}
            <ShowAll>Show all</ShowAll>
            <Cross size={10} w={1.5} color="#777572" />
          </Shelf>
        </Browser>
      </Body>
    </Desktop>
  );
}
